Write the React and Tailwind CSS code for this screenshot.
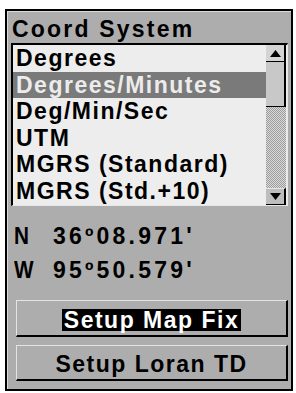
import React from 'react'

const FONT = { fontFamily: '"Liberation Sans", Arial, sans-serif' }

const rows = [
  'Degrees',
  'Degrees/Minutes',
  'Deg/Min/Sec',
  'UTM',
  'MGRS (Standard)',
  'MGRS (Std.+10)',
]

const coords = [
  ['N', "36º08.971'"],
  ['W', "95º50.579'"],
]

function Arrow({ down = false }) {
  return (
    <svg width="11" height="7" viewBox="0 0 11 7">
      {down ? (
        <polygon points="0,0 11,0 5.5,7" fill="#000" />
      ) : (
        <polygon points="5.5,0 11,7 0,7" fill="#000" />
      )}
    </svg>
  )
}

function ScrollBar() {
  return (
    <div className="flex w-[20px] flex-col">
      <div className="flex h-[17px] items-center justify-center border-b border-r-2 border-black bg-[#d4d4d4]">
        <Arrow />
      </div>
      <div className="h-[45px] border-b border-r-2 border-black bg-[#c8c8c8]" />
      <div className="flex-1 bg-[repeating-conic-gradient(#9a9a9a_0_25%,#dcdcdc_0_50%)] bg-[length:2px_2px]" />
      <div className="flex h-[17px] items-center justify-center border-t border-t-[#e6e6e6] border-b border-r-2 border-black bg-[#bdbdbd]">
        <Arrow down />
      </div>
    </div>
  )
}

function Button({ label, selected = false, className = '' }) {
  return (
    <div
      className={`mr-[3px] ml-[8px] flex items-center justify-center border-t border-l border-[#e4e4e4] border-b-2 border-r-2 border-b-black border-r-black pt-[3px] ${className}`}
    >
      <span
        className={`px-[2px] text-[23px] font-bold leading-[22px] tracking-[1.5px] ${
          selected ? 'bg-black text-white' : 'text-black'
        }`}
      >
        {label}
      </span>
    </div>
  )
}

export default function App() {
  return (
    <div className="h-[393px] w-[296px] bg-white pt-[9px] pl-[5px]" style={FONT}>
      <div className="h-[382px] w-[288px] border-2 border-black bg-[#adadad]">
        <div className="flex h-full flex-col border-t border-l border-[#dadada]">
          {/* Title */}
          <div className="h-[31px] pt-[3px] pl-[4px] text-[23px] font-bold leading-[28px] tracking-[2.2px] text-black">
            Coord System
          </div>

          {/* List */}
          <div className="mr-[3px] ml-[3px] flex h-[163px] border-t-2 border-l-2 border-black border-b border-r border-b-[#e8e8e8] border-r-[#e8e8e8] bg-[#ededed]">
            <div className="flex-1">
              {rows.map((r, i) => (
                <div
                  key={r}
                  className={`h-[26.6px] pl-[3px] text-[23px] font-bold leading-[26.6px] tracking-[1.5px] whitespace-nowrap ${
                    i === 1 ? 'bg-[#7a7a7a] text-[#ececec]' : 'text-black'
                  }`}
                >
                  {r}
                </div>
              ))}
            </div>
            <ScrollBar />
            <div className="w-[1px]" />
          </div>

          {/* Position */}
          <div className="mt-[13px] grid grid-cols-[39px_auto] pl-[6px] text-[23px] font-bold leading-[34px] text-black">
            {coords.map(([d, v]) => (
              <React.Fragment key={d}>
                <span className="scale-x-90 origin-left">{d}</span>
                <span className="tracking-[3.2px]">{v}</span>
              </React.Fragment>
            ))}
          </div>

          {/* Buttons */}
          <Button label="Setup Map Fix" selected className="mt-[13px] h-[37px]" />
          <Button label="Setup Loran TD" className="mt-[8px] h-[36px]" />
        </div>
      </div>
    </div>
  )
}
